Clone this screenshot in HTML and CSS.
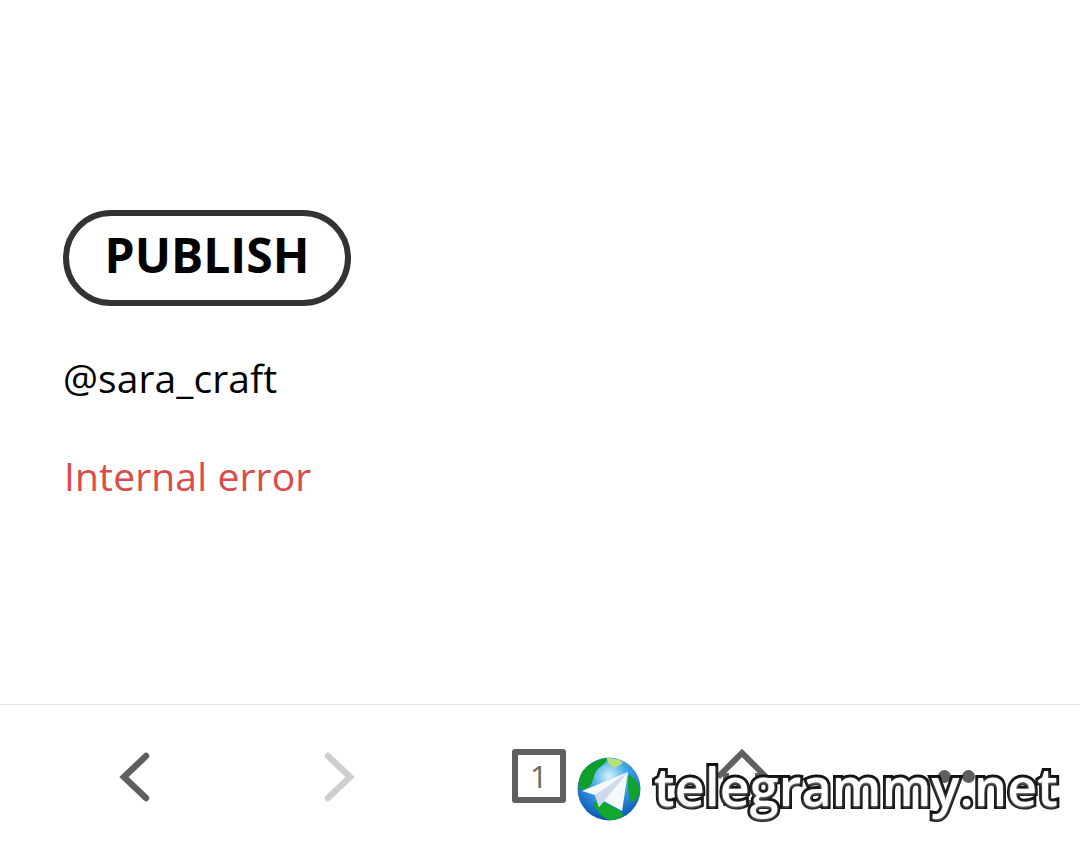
FILE: index.html
```html
<!DOCTYPE html>
<html lang="en">
<head>
<meta charset="utf-8">
<title>Publish</title>
<link rel="stylesheet" href="styles.css">
</head>
<body>
<main class="content">
  <button class="publish" type="button">PUBLISH</button>
  <p class="handle">@sara_craft</p>
  <p class="error">Internal error</p>
</main>
<nav class="toolbar">
  <div class="slot">
    <svg class="icon" width="44" height="60" viewBox="0 0 44 60"><path d="M33 9 11 30l22 21" fill="none" stroke="#5f5f5f" stroke-width="6.5" stroke-linecap="round" stroke-linejoin="miter"/></svg>
  </div>
  <div class="slot">
    <svg class="icon" width="44" height="60" viewBox="0 0 44 60"><path d="M12 9l22 21-22 21" fill="none" stroke="#cfcfcf" stroke-width="6.5" stroke-linecap="round" stroke-linejoin="miter"/></svg>
  </div>
  <div class="slot">
    <div class="tabs">1</div>
  </div>
  <div class="slot">
    <svg class="icon home" width="60" height="60" viewBox="0 0 60 60"><path d="M6 30 30 6l24 24M14 26v30h32V26" fill="none" stroke="#5f5f5f" stroke-width="6"/></svg>
  </div>
  <div class="slot">
    <div class="dots"><span></span><span></span><span></span></div>
  </div>
</nav>
<div class="watermark">
  <svg class="globe" width="64" height="64" viewBox="0 0 64 64">
    <defs>
      <radialGradient id="sea" cx="50%" cy="30%" r="72%">
        <stop offset="0" stop-color="#d8f3fb"/>
        <stop offset="0.4" stop-color="#3fa9e8"/>
        <stop offset="1" stop-color="#0a4fb0"/>
      </radialGradient>
    </defs>
    <circle cx="32" cy="32" r="31.5" fill="url(#sea)"/>
    <path d="M5 15C11 7 20 2 30 1c2 3-6 8-10 12-4 5-3 12-8 17-3 2-6 3-10 3C1 27 2 20 5 15z" fill="#0f9e2c"/>
    <path d="M30 1c6 0 12 1 16 4-2 3-6 5-10 6-3-2-6-6-6-10z" fill="#b4df78"/>
    <path d="M52 17c6 4 10 11 11 18-2 6-6 10-9 10-3-8-4-20-2-28z" fill="#0fa52c"/>
    <path d="M16 46c8-2 16 1 24 6l7 6c-4 4-10 5-15 5-7-3-13-9-16-17z" fill="#12a82e"/>
    <path d="M5 34 51 15 45 54 27 44l-5 6-4-12z" fill="#f6f9fc"/>
    <path d="M18 38 51 15 27 44l-5 6z" fill="#cddbe8"/>
  </svg>
  <span class="site">telegrammy.net</span>
</div>
</body>
</html>
```
FILE: styles.css
```css
* { box-sizing: border-box; }
html, body { margin: 0; padding: 0; }
body {
  width: 1080px;
  height: 848px;
  position: relative;
  overflow: hidden;
  background: #fff;
  font-family: "Open Sans", "Noto Sans", sans-serif;
}
.content {
  height: 704px;
  padding: 210px 0 0 63px;
  display: flex;
  flex-direction: column;
  align-items: flex-start;
}
.publish {
  width: 288px;
  height: 96px;
  border: 6px solid #333;
  border-radius: 48px;
  background: #fff;
  color: #000;
  font-family: "Open Sans", sans-serif;
  font-weight: 700;
  font-size: 48px;
  line-height: 1;
  padding: 0 0 7px;
}
.handle {
  margin: 47px 0 0 0;
  font-size: 39px;
  line-height: 50px;
  font-weight: 400;
  color: #000;
  letter-spacing: 0.1px;
}
.error {
  margin: 48px 0 0 1px;
  font-size: 39px;
  line-height: 50px;
  font-weight: 400;
  color: #dc4a4a;
  letter-spacing: 0.15px;
}
.toolbar {
  height: 144px;
  border-top: 1px solid #e2e2e2;
  padding: 0 34px;
  display: grid;
  grid-template-columns: repeat(5, 1fr);
  align-items: center;
}
.slot {
  display: flex;
  justify-content: center;
  align-items: center;
  height: 143px;
}
.icon { display: block; }
.tabs {
  width: 54px;
  height: 54px;
  margin: 0 2px 2px 0;
  border: 6px solid #5f5f5f;
  border-radius: 3px;
  display: flex;
  align-items: center;
  justify-content: center;
  font-size: 31px;
  color: #6a6a6a;
}
.dots { display: flex; gap: 11px; }
.dots span {
  width: 13px;
  height: 13px;
  border-radius: 50%;
  background: #5f5f5f;
}
.dots span:first-child { visibility: hidden; }
.watermark {
  position: absolute;
  left: 577px;
  top: 756px;
  display: flex;
  align-items: center;
  gap: 13px;
}
.globe { display: block; flex: none; }
.site {
  font-family: "Open Sans", sans-serif;
  font-weight: 600;
  font-size: 52px;
  line-height: 60px;
  padding-bottom: 6px;
  color: #fff;
  -webkit-text-stroke: 6px #111;
  paint-order: stroke fill;
  letter-spacing: 0.2px;
  white-space: nowrap;
  text-shadow: 0 1px 3px #999;
}
```
